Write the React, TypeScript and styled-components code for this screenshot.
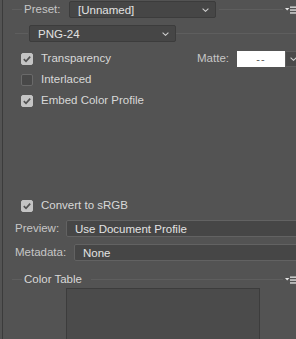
import React from "react";
import styled, { createGlobalStyle } from "styled-components";

const Global = createGlobalStyle`
  html, body { margin: 0; padding: 0; background: #535353; }
  body { font-family: "Liberation Sans", Arial, sans-serif; }
`;

const Frame = styled.div`
  width: 296px;
  height: 339px;
  overflow: hidden;
  background: #535353;
  padding-left: 2px;
  box-sizing: border-box;
`;

const Panel = styled.div`
  height: 100%;
  border-left: 1px solid #3b3b3b;
  display: flex;
  flex-direction: column;
  font-size: 11.5px;
  color: #d4d4d4;
`;

const Row = styled.div<{ $top?: number; $h?: number }>`
  display: flex;
  align-items: center;
  height: ${(p) => p.$h ?? 17}px;
  margin-top: ${(p) => p.$top ?? 0}px;
  flex-shrink: 0;
`;

const Rule = styled.div<{ $w?: number; $ml?: number; $mr?: number }>`
  height: 1px;
  background: #5e5e5e;
  flex: ${(p) => (p.$w ? `0 0 ${p.$w}px` : "1 1 auto")};
  margin-left: ${(p) => p.$ml ?? 0}px;
  margin-right: ${(p) => p.$mr ?? 0}px;
`;

const Label = styled.span<{ $w?: number; $ml?: number; $dim?: boolean }>`
  flex: 0 0 ${(p) => (p.$w ? `${p.$w}px` : "auto")};
  margin-left: ${(p) => p.$ml ?? 0}px;
  color: ${(p) => (p.$dim ? "#c6c6c6" : "#d8d8d8")};
  white-space: nowrap;
  line-height: 17px;
`;

const Select = styled.div<{ $w?: number; $light?: boolean; $mr?: number }>`
  box-sizing: border-box;
  height: 17px;
  flex: ${(p) => (p.$w ? `0 0 ${p.$w}px` : "1 0 auto")};
  margin-right: ${(p) => p.$mr ?? 0}px;
  background: #464646;
  border: 1px solid ${(p) => (p.$light ? "#626262" : "#3c3c3c")};
  border-radius: 2px;
  display: flex;
  align-items: center;
  padding: 0 6px 0 8px;
  color: #e2e2e2;
  white-space: nowrap;
`;

const SelectText = styled.span`
  flex: 1;
`;

const Chevron = () => (
  <svg width="7" height="4" viewBox="0 0 7 4" style={{ flexShrink: 0 }}>
    <path d="M0.6 0.6 L3.5 3.3 L6.4 0.6" fill="none" stroke="#cfcfcf" strokeWidth="1.1" />
  </svg>
);

const MenuIcon = () => (
  <svg width="11" height="8" viewBox="0 0 11 8" style={{ flexShrink: 0 }}>
    <path d="M0 2 L4.4 2 L2.2 4.6 Z" fill="#e4e4e4" />
    <rect x="5" y="0.5" width="6" height="1.3" fill="#e4e4e4" />
    <rect x="5" y="3.4" width="6" height="1.3" fill="#e4e4e4" />
    <rect x="5" y="6.3" width="6" height="1.3" fill="#e4e4e4" />
  </svg>
);

const Box = styled.span<{ $checked?: boolean }>`
  box-sizing: border-box;
  width: 12px;
  height: 12px;
  flex: 0 0 12px;
  margin-left: 18px;
  margin-right: 8px;
  border-radius: 2px;
  background: ${(p) => (p.$checked ? "#c4c4c4" : "#484848")};
  border: 1px solid ${(p) => (p.$checked ? "#c4c4c4" : "#6a6a6a")};
  display: flex;
  align-items: center;
  justify-content: center;
`;

const Check = ({ checked, label }: { checked?: boolean; label: string }) => (
  <>
    <Box $checked={checked}>
      {checked && (
        <svg width="10" height="10" viewBox="0 0 10 10">
          <path d="M1.8 5.2 L4 7.3 L8.2 2.6" fill="none" stroke="#525252" strokeWidth="1.7" />
        </svg>
      )}
    </Box>
    <Label>{label}</Label>
  </>
);

const Matte = styled.div`
  margin-left: auto;
  margin-right: -12px;
  display: flex;
  align-items: center;
  height: 17px;
`;

const Swatch = styled.div`
  width: 48px;
  height: 16px;
  margin-left: 8px;
  background: #ffffff;
  color: #5a5a5a;
  display: flex;
  align-items: center;
  justify-content: center;
  font-size: 11px;
  letter-spacing: 1px;
`;

const SwatchArrow = styled.div`
  box-sizing: border-box;
  width: 23px;
  height: 16px;
  background: #4a4a4a;
  border: 1px solid #5e5e5e;
  display: flex;
  align-items: center;
  padding-left: 4px;
`;

const TableBox = styled.div`
  box-sizing: border-box;
  margin-left: 63px;
  width: 194px;
  height: 60px;
  flex-shrink: 0;
  background: #4b4b4b;
  border: 1px solid #3c3c3c;
`;

export default function App() {
  return (
    <>
      <Global />
      <Frame>
        <Panel>
          <Row $top={1}>
            <Rule $w={10} $ml={9} />
            <Label $w={45} $ml={2} $dim>Preset:</Label>
            <Select $w={147}>
              <SelectText>[Unnamed]</SelectText>
              <Chevron />
            </Select>
            <Rule $ml={3} $mr={2} />
            <MenuIcon />
          </Row>
          <Row $top={7}>
            <Rule $w={13} $ml={12} />
            <Select $w={147} style={{ marginLeft: 1 }}>
              <SelectText>PNG-24</SelectText>
              <Chevron />
            </Select>
            <Rule />
          </Row>
          <Row $top={8}>
            <Check checked label="Transparency" />
            <Matte>
              <Label $dim>Matte:</Label>
              <Swatch>--</Swatch>
              <SwatchArrow>
                <Chevron />
              </SwatchArrow>
            </Matte>
          </Row>
          <Row $top={4}>
            <Check label="Interlaced" />
          </Row>
          <Row $top={4}>
            <Check checked label="Embed Color Profile" />
          </Row>
          <Row $top={88}>
            <Check checked label="Convert to sRGB" />
          </Row>
          <Row $top={6}>
            <Label $w={51} $ml={12} $dim>Preview:</Label>
            <Select $light $mr={-10}>
              <SelectText>Use Document Profile</SelectText>
            </Select>
          </Row>
          <Row $top={7}>
            <Label $w={59} $ml={12} $dim>Metadata:</Label>
            <Select $light $mr={-10}>
              <SelectText>None</SelectText>
            </Select>
          </Row>
          <Row $top={10}>
            <Rule $w={10} $ml={9} />
            <Label $ml={2}>Color Table</Label>
            <Rule $ml={9} $mr={2} />
            <MenuIcon />
          </Row>
          <TableBox />
        </Panel>
      </Frame>
    </>
  );
}
